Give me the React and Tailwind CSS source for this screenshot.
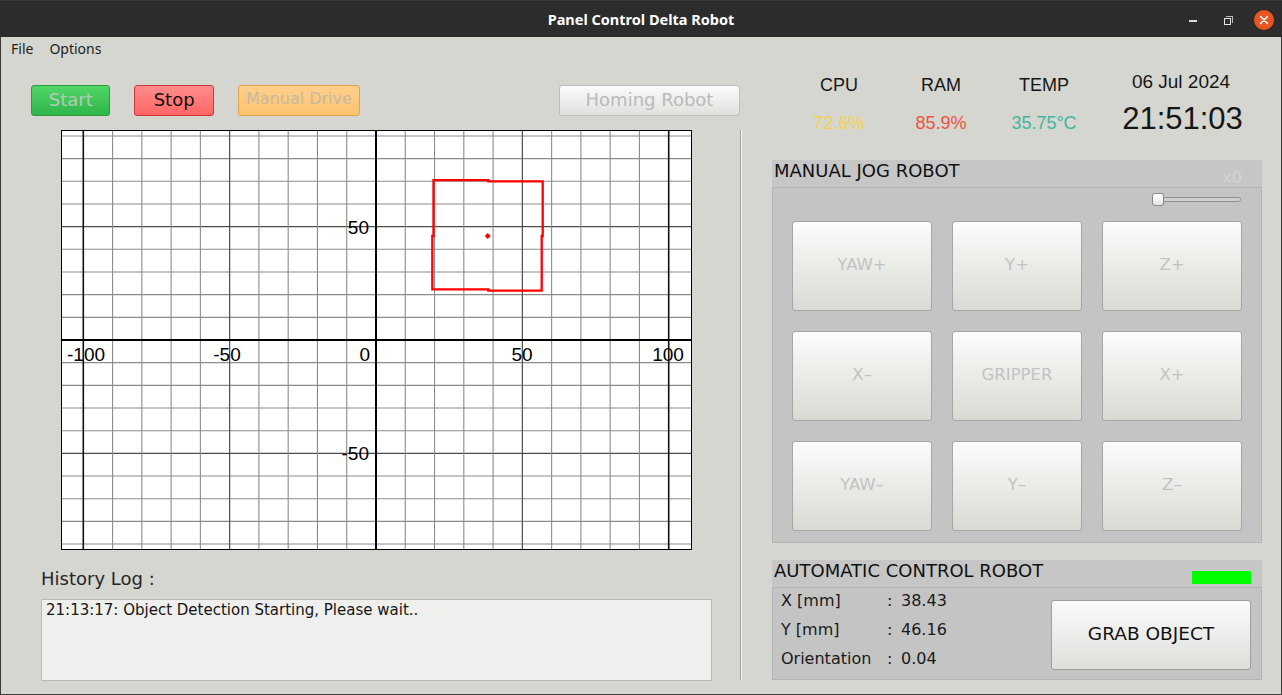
import React from "react";

const OX = 315;
const OY = 210;
const SX = 2.927;
const SY = 2.267;

function Chart() {
  const vs = [];
  for (let v = -100; v <= 100; v += 10) if (v !== 0) vs.push(v);
  const hs = [];
  for (let v = -90; v <= 90; v += 10) if (v !== 0) hs.push(v);
  const lf = { fontFamily: "'Liberation Sans', Arial, sans-serif", fontSize: 19 };
  return (
    <svg width="631" height="420" viewBox="0 0 631 420" className="block">
      <rect x="0" y="0" width="631" height="420" fill="#ffffff" />
      {hs.map((v) => {
        const y = OY - v * SY;
        const major = Math.abs(v) === 50;
        return (
          <line
            key={"h" + v}
            x1="0"
            x2="631"
            y1={y}
            y2={y}
            stroke={major ? "#4d4d4d" : "#8c8c8c"}
            strokeWidth={major ? 1.2 : 1.1}
          />
        );
      })}
      {vs.map((v) => {
        const x = OX + v * SX;
        const a = Math.abs(v);
        const col = a === 100 ? "#111111" : a === 50 ? "#4d4d4d" : "#8c8c8c";
        const w = a === 100 ? 1.6 : a === 50 ? 1.2 : 1.1;
        return <line key={"v" + v} x1={x} x2={x} y1="0" y2="420" stroke={col} strokeWidth={w} />;
      })}
      <line x1="0" x2="631" y1={OY} y2={OY} stroke="#000" strokeWidth="2" />
      <line x1={OX} x2={OX} y1="0" y2="420" stroke="#000" strokeWidth="2" />
      <rect x="0.5" y="0.5" width="630" height="419" fill="none" stroke="#000" strokeWidth="1" />

      <text x="308" y="103.5" textAnchor="end" style={lf}>50</text>
      <text x="308" y="330" textAnchor="end" style={lf}>-50</text>
      <text x="25" y="231" textAnchor="middle" style={lf}>-100</text>
      <text x="166" y="231" textAnchor="middle" style={lf}>-50</text>
      <text x="309" y="231" textAnchor="end" style={lf}>0</text>
      <text x="461" y="231" textAnchor="middle" style={lf}>50</text>
      <text x="607" y="231" textAnchor="middle" style={lf}>100</text>

      <polygon
        points="372.5,50.2 427.3,50.2 427.3,51.3 481.7,51.3 481.7,106 480.7,106 480.7,160.7 427.3,160.7 427.3,159.3 371.3,159.3 371.3,106 372.5,106"
        fill="none"
        stroke="#ff0000"
        strokeWidth="2.3"
      />
      <polygon points="426.7,103 429.7,106 426.7,109 423.7,106" fill="#ff0000" />
    </svg>
  );
}

function JogButton({ label }) {
  return (
    <div className="flex items-center justify-center pb-[1px] rounded-[3px] border border-[#a6a6a6] bg-linear-to-b from-[#fcfdfb] to-[#d8dad4] text-[16.5px] text-[#c2c2c2] font-['DejaVu_Sans',sans-serif]">
      {label}
    </div>
  );
}

export default function App() {
  const jog = ["YAW+", "Y+", "Z+", "X–", "GRIPPER", "X+", "YAW–", "Y–", "Z–"];
  return (
    <div className="w-[1282px] h-[695px] flex flex-col overflow-hidden bg-[#d4d6cf] font-['DejaVu_Sans',sans-serif]">
      {/* Title bar */}
      <div className="h-[37px] shrink-0 bg-[#2c2c2c] border-t border-[#3a3a3a] grid grid-cols-[1fr_auto_1fr] items-center pt-[2px]">
        <div />
        <div className="text-[14.5px] font-bold text-white font-['Noto_Sans',sans-serif]">Panel Control Delta Robot</div>
        <div className="flex items-center justify-end">
          <div className="w-[8px] h-[2px] bg-[#dcdcdc] mt-[2px]" />
          <div className="relative w-[9px] h-[9px] ml-[27px]">
            <div className="absolute left-[2px] top-0 w-[7px] h-[7px] border-t border-r border-[#bdbdbd]" />
            <div className="absolute left-0 top-[2px] w-[7px] h-[7px] border-[1.5px] border-[#e6e6e6]" />
          </div>
          <div className="ml-[21px] mr-[8px] w-[20px] h-[20px] rounded-full bg-[#e95420] flex items-center justify-center">
            <svg width="10" height="10" viewBox="0 0 10 10">
              <path d="M1.5 1.5 L8.5 8.5 M8.5 1.5 L1.5 8.5" stroke="#fff" strokeWidth="1.6" strokeLinecap="round" />
            </svg>
          </div>
        </div>
      </div>

      {/* Window body */}
      <div className="flex-1 flex flex-col border-x border-b border-[#3a3a3a]">
        {/* Menu */}
        <div className="h-[23px] shrink-0 flex items-start pt-[1px] pl-[10px] gap-[16px] text-[14px] text-[#1e1e1e] font-['Noto_Sans',sans-serif]">
          <span>File</span>
          <span>Options</span>
        </div>

        <div className="flex-1 flex">
          {/* Left column */}
          <div className="w-[739px] shrink-0 flex flex-col">
            <div className="mt-[25px] h-[31px] flex pl-[30px]">
              <div className="w-[80px] pb-[3px] rounded-[3px] border border-[#2a9a3b] bg-linear-to-b from-[#50d566] to-[#2db64b] flex items-center justify-center text-[18px] text-[#b5cab4]">
                Start
              </div>
              <div className="ml-[24px] w-[80px] pb-[3px] rounded-[3px] border border-[#cf3535] bg-linear-to-b from-[#ff8c8c] to-[#ff6565] flex items-center justify-center text-[18px] text-[#111]">
                Stop
              </div>
              <div className="ml-[24px] w-[123px] pb-[3px] rounded-[3px] border border-[#e5a24d] bg-linear-to-b from-[#ffd08c] to-[#fcc26f] flex items-center justify-center text-[16px] text-[#c6b8a2]">
                Manual Drive
              </div>
              <div className="ml-[199px] w-[181px] pb-[3px] shrink-0 rounded-[3px] border border-[#bdbdbd] bg-linear-to-b from-[#fbfbfa] to-[#e0e1dd] flex items-center justify-center text-[18px] text-[#bababa]">
                Homing Robot
              </div>
            </div>

            <div className="mt-[14px] ml-[60px]">
              <Chart />
            </div>

            <div className="mt-[18px] ml-[40px] text-[18px] leading-[21px] text-[#262626]">History Log :</div>

            <div className="mt-[10px] ml-[40px] w-[671px] h-[82px] border border-[#b8b8b8] bg-[#efefed] pl-[4px] pt-[2px] text-[15px] leading-[17.5px] text-[#161616]">
              21:13:17: Object Detection Starting, Please wait..
            </div>
          </div>

          {/* Separator */}
          <div className="mt-[70px] h-[550px] flex shrink-0">
            <div className="w-px bg-[#a3a3a3]" />
            <div className="w-px bg-[#f4f4f2]" />
          </div>

          {/* Right column */}
          <div className="flex-1 flex flex-col">
            <div className="mt-[11px] flex items-start font-['Liberation_Sans',Arial,sans-serif] text-[#161616]">
              <div className="ml-[57px] w-[80px] mt-[4px] flex flex-col items-center">
                <div className="text-[18px] leading-[21px]">CPU</div>
                <div className="mt-[17px] text-[18px] leading-[21px] text-[#f6d24c]">72.6%</div>
              </div>
              <div className="ml-[22px] w-[80px] mt-[4px] flex flex-col items-center">
                <div className="text-[18px] leading-[21px]">RAM</div>
                <div className="mt-[17px] text-[18px] leading-[21px] text-[#f0533f]">85.9%</div>
              </div>
              <div className="ml-[23px] w-[80px] mt-[4px] flex flex-col items-center">
                <div className="text-[18px] leading-[21px]">TEMP</div>
                <div className="mt-[17px] text-[18px] leading-[21px] text-[#43b59e]">35.75°C</div>
              </div>
              <div className="ml-[27px] w-[140px] flex flex-col items-center">
                <div className="text-[19px] leading-[22px]">06 Jul 2024</div>
                <div className="mt-[8px] ml-[3px] text-[31px] leading-[36px]">21:51:03</div>
              </div>
            </div>

            {/* Manual jog group */}
            <div className="mt-[23px] ml-[30px] w-[490px] h-[383px] bg-[#c6c6c6] flex flex-col">
              <div className="h-[27px] shrink-0 flex justify-between items-start">
                <div className="pl-[2px] text-[18px] leading-[21px] text-[#111]">MANUAL JOG ROBOT</div>
                <div className="mt-[8px] pr-[20px] text-[16px] leading-[19px] text-[#d3d3d3]">x0</div>
              </div>
              <div className="flex-1 border border-[#b4b4b4] bg-[#c4c4c4] flex flex-col">
                <div className="mt-[5px] self-end mr-[20px] relative w-[89px] h-[13px]">
                  <div className="absolute left-0 right-0 top-[4px] h-[5px] rounded-[3px] border border-[#8f8f8f] bg-[#cfcfcf]" />
                  <div className="absolute left-0 top-0 w-[12px] h-[13px] rounded-[3px] border border-[#8a8a8a] bg-linear-to-b from-[#ffffff] to-[#e4e4e4]" />
                </div>
                <div className="mt-[15px] ml-[19px] grid grid-cols-[140px_130px_140px] grid-rows-[90px_90px_90px] gap-[20px]">
                  {jog.map((l) => (
                    <JogButton key={l} label={l} />
                  ))}
                </div>
              </div>
            </div>

            {/* Automatic control group */}
            <div className="mt-[17px] ml-[30px] w-[490px] h-[120px] bg-[#c6c6c6] flex flex-col">
              <div className="h-[27px] shrink-0 flex justify-between items-start">
                <div className="pl-[2px] text-[18px] leading-[21px] text-[#111]">AUTOMATIC CONTROL ROBOT</div>
                <div className="mt-[11px] mr-[11px] w-[59px] h-[13px] bg-[#00ff00]" />
              </div>
              <div className="flex-1 border border-[#b4b4b4] bg-[#c4c4c4] flex">
                <div className="pl-[8px] pt-[3px] grid grid-cols-[106px_14px_auto] gap-y-[10px] text-[16px] leading-[19px] text-[#1a1a1a] auto-rows-[19px]">
                  <div>X [mm]</div>
                  <div>:</div>
                  <div>38.43</div>
                  <div>Y [mm]</div>
                  <div>:</div>
                  <div>46.16</div>
                  <div>Orientation</div>
                  <div>:</div>
                  <div>0.04</div>
                </div>
                <div className="ml-auto mr-[10px] mt-[12px] w-[200px] h-[70px] pb-[2px] rounded-[3px] border border-[#9e9e9e] bg-linear-to-b from-[#fbfbfa] to-[#dedfdb] flex items-center justify-center text-[18.5px] text-[#111]">
                  GRAB OBJECT
                </div>
              </div>
            </div>
          </div>
        </div>
      </div>
    </div>
  );
}
